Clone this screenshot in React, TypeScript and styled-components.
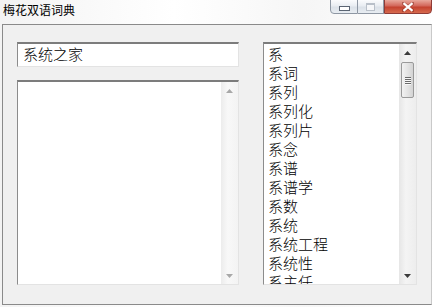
import * as React from "react";
import styled, { createGlobalStyle } from "styled-components";

const GlobalStyle = createGlobalStyle`
    html, body {
        margin: 0;
        padding: 0;
        background: #ffffff;
        font-family: "Noto Sans CJK SC", "Liberation Sans", sans-serif;
    }
`;

const Window = styled.div`
    width: 434px;
    height: 307px;
    display: flex;
    flex-direction: column;
    background: linear-gradient(90deg, #f3f3f3 0%, #ffffff 40%, #f6f6f6 70%, #ffffff 100%);
    overflow: hidden;
`;

const TitleBar = styled.div`
    height: 24px;
    display: flex;
    align-items: flex-start;
    justify-content: space-between;
    padding-left: 3px;
    padding-right: 2px;
`;

const Title = styled.div`
    font-size: 12px;
    line-height: 12px;
    margin-top: 4px;
    color: #000;
`;

const Caption = styled.div`
    display: flex;
    margin-top: -1px;
`;

const CapButton = styled.div<{ $w: number; $close?: boolean }>`
    width: ${(p) => p.$w}px;
    height: 15px;
    box-sizing: border-box;
    border: 1px solid ${(p) => (p.$close ? "#8f3b36" : "#8e97a3")};
    border-left-width: ${(p) => (p.$close ? 1 : 0)}px;
    background: ${(p) =>
        p.$close
            ? "linear-gradient(#e8a89c 0%, #d3675a 45%, #c4422f 55%, #d66a4e 100%)"
            : "linear-gradient(#fbfcfd 0%, #e9edf2 45%, #dbe1e8 55%, #e8edf2 100%)"};
    display: flex;
    align-items: center;
    justify-content: center;
    &:first-child {
        border-left-width: 1px;
        border-bottom-left-radius: 4px;
    }
    &:last-child {
        border-bottom-right-radius: 4px;
    }
`;

const MinGlyph = styled.div`
    width: 9px;
    height: 3px;
    margin-top: 4px;
    border: 1px solid #5b6573;
    background: #fff;
`;

const MaxGlyph = styled.div`
    width: 7px;
    height: 5px;
    border: 1px solid #b9c0c9;
    border-top-width: 2px;
    background: #f6f7f9;
`;

const Client = styled.div`
    margin-left: 2px;
    width: 430px;
    height: 281px;
    box-sizing: border-box;
    border: 1px solid #8a8a8a;
    border-right-color: #c9c9c9;
    background: #f0f0f0;
    display: flex;
    gap: 24px;
    padding: 17px 0 0 14px;
`;

const LeftColumn = styled.div`
    width: 222px;
    display: flex;
    flex-direction: column;
    gap: 13px;
`;

const Sunken = styled.div`
    box-sizing: border-box;
    background: #fff;
    border: 1px solid #e3e3e3;
    border-top: 2px solid #7c7c7c;
    border-left: 1px solid #8c8c8c;
`;

const InputBox = styled(Sunken)`
    height: 25px;
    font-size: 15px;
    font-weight: 300;
    line-height: 19px;
    padding-left: 5px;
    color: #000;
`;

const TextArea = styled(Sunken)`
    height: 205px;
    display: flex;
    justify-content: flex-end;
`;

const ListBox = styled(Sunken)`
    width: 154px;
    height: 243px;
    display: flex;
    overflow: hidden;
`;

const Items = styled.div`
    flex: 1;
    padding: 0 0 0 4px;
    overflow: hidden;
`;

const Item = styled.div`
    font-size: 15px;
    font-weight: 300;
    line-height: 19px;
    height: 19px;
    color: #000;
    white-space: nowrap;
`;

const ScrollBar = styled.div<{ $disabled?: boolean }>`
    width: 17px;
    display: flex;
    flex-direction: column;
    background: ${(p) =>
        p.$disabled
            ? "linear-gradient(90deg, #ececec, #f8f8f8 40%, #f3f3f3)"
            : "linear-gradient(90deg, #e6e6e6, #f4f4f4 40%, #ededed)"};
`;

const Arrow = styled.div<{ $disabled?: boolean }>`
    height: 17px;
    display: flex;
    align-items: center;
    justify-content: center;
    svg path {
        fill: ${(p) => (p.$disabled ? "#a8a8a8" : "#3c3c3c")};
    }
`;

const Track = styled.div`
    flex: 1;
    padding-top: 1px;
`;

const Thumb = styled.div`
    margin: 0 auto;
    width: 13px;
    height: 36px;
    box-sizing: border-box;
    border: 1px solid #9a9a9a;
    border-radius: 2px;
    background: linear-gradient(90deg, #f2f2f2, #e4e4e4 50%, #d4d4d4);
    display: flex;
    flex-direction: column;
    align-items: center;
    justify-content: center;
    gap: 1px;
`;

const Grip = styled.div`
    width: 6px;
    height: 1px;
    background: #6a6a6a;
    box-shadow: 0 1px 0 #f8f8f8;
`;

const UpArrow = () => (
    <svg width="7" height="4" viewBox="0 0 7 4">
        <path d="M3.5 0 L7 4 L0 4 Z" />
    </svg>
);

const DownArrow = () => (
    <svg width="7" height="4" viewBox="0 0 7 4">
        <path d="M0 0 L7 0 L3.5 4 Z" />
    </svg>
);

const CloseIcon = () => (
    <svg width="12" height="10" viewBox="0 0 12 10">
        <path
            d="M1 1 L11 9 M11 1 L1 9"
            stroke="#7a2218"
            strokeWidth="3.4"
            strokeLinecap="round"
            opacity="0.45"
        />
        <path d="M1.5 1.2 L10.5 8.8 M10.5 1.2 L1.5 8.8" stroke="#ffffff" strokeWidth="2.2" />
    </svg>
);

const words = [
    "系",
    "系词",
    "系列",
    "系列化",
    "系列片",
    "系念",
    "系谱",
    "系谱学",
    "系数",
    "系统",
    "系统工程",
    "系统性",
    "系主任",
];

export default function App() {
    return (
        <Window>
            <GlobalStyle />
            <TitleBar>
                <Title>梅花双语词典</Title>
                <Caption>
                    <CapButton $w={28}>
                        <MinGlyph />
                    </CapButton>
                    <CapButton $w={26}>
                        <MaxGlyph />
                    </CapButton>
                    <CapButton $w={48} $close>
                        <CloseIcon />
                    </CapButton>
                </Caption>
            </TitleBar>
            <Client>
                <LeftColumn>
                    <InputBox>系统之家</InputBox>
                    <TextArea>
                        <ScrollBar $disabled>
                            <Arrow $disabled>
                                <UpArrow />
                            </Arrow>
                            <Track />
                            <Arrow $disabled>
                                <DownArrow />
                            </Arrow>
                        </ScrollBar>
                    </TextArea>
                </LeftColumn>
                <ListBox>
                    <Items>
                        {words.map((w) => (
                            <Item key={w}>{w}</Item>
                        ))}
                    </Items>
                    <ScrollBar>
                        <Arrow>
                            <UpArrow />
                        </Arrow>
                        <Track>
                            <Thumb>
                                <Grip />
                                <Grip />
                                <Grip />
                                <Grip />
                            </Thumb>
                        </Track>
                        <Arrow>
                            <DownArrow />
                        </Arrow>
                    </ScrollBar>
                </ListBox>
            </Client>
        </Window>
    );
}
